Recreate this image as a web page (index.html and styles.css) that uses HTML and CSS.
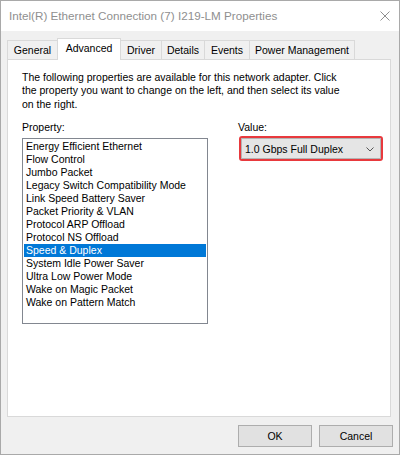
FILE: index.html
```html
<!DOCTYPE html>
<html lang="en">
<head>
<meta charset="utf-8">
<title>Intel(R) Ethernet Connection (7) I219-LM Properties</title>
<link rel="stylesheet" href="styles.css">
</head>
<body>
<div class="window">
  <div class="titlebar">
    <span class="title">Intel(R) Ethernet Connection (7) I219-LM Properties</span>
    <span class="close" aria-label="Close">
      <svg width="10" height="10" viewBox="0 0 10 10"><path d="M0.5 0.5 L9.5 9.5 M9.5 0.5 L0.5 9.5" stroke="#8f8f8f" stroke-width="1" fill="none"/></svg>
    </span>
  </div>

  <div class="tabs">
    <div class="tab tab-general">General</div>
    <div class="tab tab-advanced active">Advanced</div>
    <div class="tab tab-driver">Driver</div>
    <div class="tab tab-details">Details</div>
    <div class="tab tab-events">Events</div>
    <div class="tab tab-power">Power Management</div>
  </div>

  <div class="panel">
    <p class="intro">The following properties are available for this network adapter. Click<br>the property you want to change on the left, and then select its value<br>on the right.</p>

    <div class="fields">
      <div class="col-property">
        <div class="label">Property:</div>
        <ul class="listbox">
          <li>Energy Efficient Ethernet</li>
          <li>Flow Control</li>
          <li>Jumbo Packet</li>
          <li>Legacy Switch Compatibility Mode</li>
          <li>Link Speed Battery Saver</li>
          <li>Packet Priority &amp; VLAN</li>
          <li>Protocol ARP Offload</li>
          <li>Protocol NS Offload</li>
          <li class="selected">Speed &amp; Duplex</li>
          <li>System Idle Power Saver</li>
          <li>Ultra Low Power Mode</li>
          <li>Wake on Magic Packet</li>
          <li>Wake on Pattern Match</li>
        </ul>
      </div>

      <div class="col-value">
        <div class="label">Value:</div>
        <div class="combo-ring">
          <div class="combo">
            <span class="combo-text">1.0 Gbps Full Duplex</span>
            <svg class="chevron" width="8" height="5" viewBox="0 0 8 5"><path d="M0.5 0.5 L4 4 L7.5 0.5" stroke="#555" stroke-width="1" fill="none"/></svg>
          </div>
        </div>
      </div>
    </div>
  </div>

  <div class="footer">
    <button class="btn">OK</button>
    <button class="btn">Cancel</button>
  </div>
</div>
</body>
</html>
```

FILE: styles.css
```css
* {
  box-sizing: border-box;
}

html, body {
  margin: 0;
  padding: 0;
  background: #ffffff;
}

body {
  font-family: "Liberation Sans", Arial, sans-serif;
  font-size: 10.5px;
  color: #000;
}

.window {
  width: 400px;
  height: 455px;
  border: 1px solid #a9a9a9;
  background: #f0f0f0;
  display: flex;
  flex-direction: column;
}

/* Title bar */
.titlebar {
  height: 30px;
  flex: none;
  background: #ffffff;
  display: flex;
  align-items: center;
  justify-content: space-between;
  padding: 0 9px 2px 8px;
}

.title {
  font-size: 11.7px;
  line-height: 13px;
  color: #8f8f8f;
}

.close {
  display: flex;
  width: 10px;
  height: 10px;
  margin-top: 1px;
}

/* Tab strip */
.tabs {
  flex: none;
  height: 28px;
  padding: 7px 0 0 6px;
  display: flex;
  align-items: flex-end;
}

.tab {
  height: 19px;
  line-height: 18px;
  text-align: center;
  border: 1px solid #d9d9d9;
  border-bottom: 0;
  background: #f0f0f0;
  margin-right: -1px;
  white-space: nowrap;
}

.tab.active {
  position: relative;
  z-index: 2;
  height: 22px;
  line-height: 19px;
  margin-bottom: -1px;
  background: #ffffff;
}

.tab-general { width: 51px; }
.tab-advanced { width: 64px; }
.tab-driver { width: 42px; }
.tab-details { width: 44px; }
.tab-events { width: 46px; }
.tab-power { width: 106px; }

/* Tab page */
.panel {
  flex: none;
  height: 358px;
  margin: 0 8px 0 6px;
  background: #ffffff;
  border: 1px solid #d9d9d9;
  padding: 10.5px 0 0 14px;
}

.intro {
  margin: 0;
  line-height: 13.5px;
  white-space: nowrap;
}

.fields {
  display: flex;
  margin-top: 10px;
}

.label {
  line-height: 13px;
}

.col-property {
  width: 186px;
  flex: none;
}

.listbox {
  list-style: none;
  margin: 4px 0 0 0;
  padding: 1px;
  height: 186px;
  border: 1px solid #828790;
  background: #ffffff;
}

.listbox li {
  height: 13px;
  line-height: 13px;
  padding-left: 2px;
  white-space: nowrap;
}

.listbox li.selected {
  background: #0078d7;
  color: #ffffff;
}

.col-value {
  margin-left: 30px;
  width: 146px;
  flex: none;
}

.combo-ring {
  margin: 2px 0 0 1px;
  width: 144px;
  height: 25px;
  border: 2px solid #e8393d;
  border-radius: 3px;
}

.combo {
  height: 21px;
  border: 1px solid #b4b4b4;
  background: #e5e5e5;
  display: flex;
  align-items: center;
  justify-content: space-between;
  padding: 0 6px 0 3px;
}

.combo-text {
  line-height: 19px;
  padding-top: 1px;
}

.chevron {
  display: block;
  margin-top: 1px;
}

/* Dialog buttons */
.footer {
  flex: none;
  display: flex;
  justify-content: flex-end;
  gap: 7px;
  padding: 8px 6px 7px 0;
}

.btn {
  width: 74px;
  height: 22px;
  padding: 0;
  margin: 0;
  border: 1px solid #adadad;
  background: #e1e1e1;
  font-family: "Liberation Sans", Arial, sans-serif;
  font-size: 10.5px;
  color: #000;
  line-height: 20px;
}
```
